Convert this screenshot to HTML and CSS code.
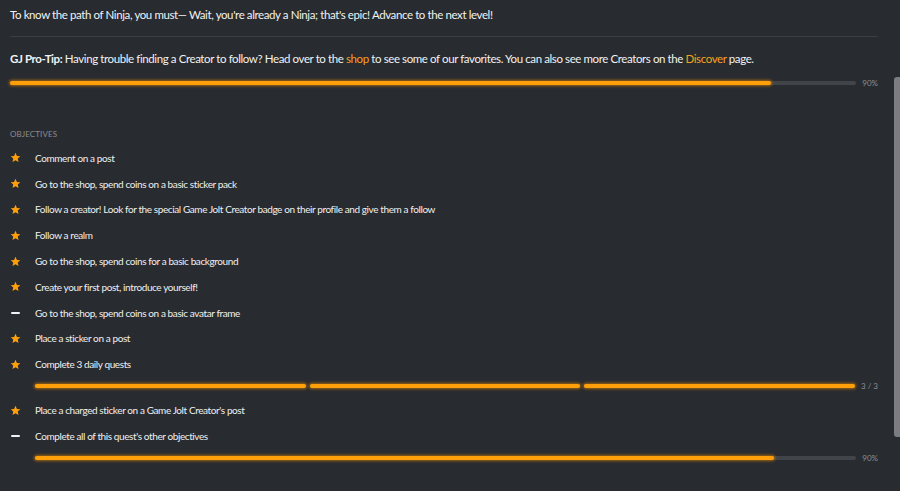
FILE: index.html
```html
<!DOCTYPE html>
<html>
<head>
<meta charset="utf-8">
<link rel="stylesheet" href="styles.css">
</head>
<body>
<div class="page">
  <p class="intro">To know the path of Ninja, you must— Wait, you're already a Ninja; that's epic! Advance to the next level!</p>
  <hr class="divider">
  <p class="tip"><b>GJ Pro-Tip:</b> Having trouble finding a Creator to follow? Head over to the <a class="link">shop</a> to see some of our favorites. You can also see more Creators on the <a class="link">Discover</a> page.</p>
  <div class="progress top">
    <div class="track"><div class="fill" style="width:90%"></div></div>
    <span class="plabel">90%</span>
  </div>

  <div class="heading">OBJECTIVES</div>
  <ul class="objectives">
    <li class="obj"><span class="icon"><svg viewBox="0 0 24 24" class="star"><path d="M12 1.8l3.1 6.9 7.4.7-5.6 5 1.7 7.3L12 17.9l-6.6 3.8 1.7-7.3-5.6-5 7.4-.7z"/></svg></span>Comment on a post</li>
    <li class="obj"><span class="icon"><svg viewBox="0 0 24 24" class="star"><path d="M12 1.8l3.1 6.9 7.4.7-5.6 5 1.7 7.3L12 17.9l-6.6 3.8 1.7-7.3-5.6-5 7.4-.7z"/></svg></span>Go to the shop, spend coins on a basic sticker pack</li>
    <li class="obj"><span class="icon"><svg viewBox="0 0 24 24" class="star"><path d="M12 1.8l3.1 6.9 7.4.7-5.6 5 1.7 7.3L12 17.9l-6.6 3.8 1.7-7.3-5.6-5 7.4-.7z"/></svg></span>Follow a creator! Look for the special Game Jolt Creator badge on their profile and give them a follow</li>
    <li class="obj"><span class="icon"><svg viewBox="0 0 24 24" class="star"><path d="M12 1.8l3.1 6.9 7.4.7-5.6 5 1.7 7.3L12 17.9l-6.6 3.8 1.7-7.3-5.6-5 7.4-.7z"/></svg></span>Follow a realm</li>
    <li class="obj"><span class="icon"><svg viewBox="0 0 24 24" class="star"><path d="M12 1.8l3.1 6.9 7.4.7-5.6 5 1.7 7.3L12 17.9l-6.6 3.8 1.7-7.3-5.6-5 7.4-.7z"/></svg></span>Go to the shop, spend coins for a basic background</li>
    <li class="obj"><span class="icon"><svg viewBox="0 0 24 24" class="star"><path d="M12 1.8l3.1 6.9 7.4.7-5.6 5 1.7 7.3L12 17.9l-6.6 3.8 1.7-7.3-5.6-5 7.4-.7z"/></svg></span>Create your first post, introduce yourself!</li>
    <li class="obj"><span class="icon"><span class="dash"></span></span>Go to the shop, spend coins on a basic avatar frame</li>
    <li class="obj"><span class="icon"><svg viewBox="0 0 24 24" class="star"><path d="M12 1.8l3.1 6.9 7.4.7-5.6 5 1.7 7.3L12 17.9l-6.6 3.8 1.7-7.3-5.6-5 7.4-.7z"/></svg></span>Place a sticker on a post</li>
    <li class="obj"><span class="icon"><svg viewBox="0 0 24 24" class="star"><path d="M12 1.8l3.1 6.9 7.4.7-5.6 5 1.7 7.3L12 17.9l-6.6 3.8 1.7-7.3-5.6-5 7.4-.7z"/></svg></span>Complete 3 daily quests</li>
    <li class="progress sub">
      <div class="segments">
        <div class="seg"><div class="fill full"></div></div>
        <div class="seg"><div class="fill full"></div></div>
        <div class="seg"><div class="fill full"></div></div>
      </div>
      <span class="plabel">3 / 3</span>
    </li>
    <li class="obj"><span class="icon"><svg viewBox="0 0 24 24" class="star"><path d="M12 1.8l3.1 6.9 7.4.7-5.6 5 1.7 7.3L12 17.9l-6.6 3.8 1.7-7.3-5.6-5 7.4-.7z"/></svg></span>Place a charged sticker on a Game Jolt Creator's post</li>
    <li class="obj"><span class="icon"><span class="dash"></span></span>Complete all of this quest's other objectives</li>
    <li class="progress sub">
      <div class="track"><div class="fill" style="width:90%"></div></div>
      <span class="plabel">90%</span>
    </li>
  </ul>
</div>
<div class="scroll-thumb"></div>
</body>
</html>
```

FILE: styles.css
```css
html, body {
  margin: 0;
  padding: 0;
  background: #282b2f;
  height: 100%;
  overflow: hidden;
}
body {
  font-family: Lato, "Open Sans", sans-serif;
  color: #f2f2f2;
  position: relative;
}
.page {
  padding: 7px 22px 0 10px;
}
.intro {
  margin: 0;
  font-size: 11.5px;
  letter-spacing: -0.4px;
  line-height: 16px;
}
.divider {
  border: 0;
  height: 1px;
  background: #3b3e42;
  margin: 13px 0 13px;
}
.tip {
  margin: 0;
  font-size: 11.5px;
  letter-spacing: -0.4px;
  line-height: 17px;
}
.tip b { font-weight: 700; }
.link { color: #f7a11b; }
.progress {
  display: flex;
  align-items: center;
}
.progress.top {
  margin-top: 11px;
}
.track, .seg {
  flex: 1;
  height: 4px;
  background: #414448;
  border-radius: 2px;
  position: relative;
}
.fill {
  height: 100%;
  background: #ff9f0a;
  border-radius: 2px;
  box-shadow: 0 0 3px 1px rgba(255, 150, 0, 0.55);
}
.fill.full { width: 100%; }
.plabel {
  min-width: 16px;
  margin-left: 6px;
  font-size: 8px;
  color: #8d9095;
  text-align: right;
  white-space: nowrap;
}
.heading {
  margin-top: 41px;
  font-size: 8px;
  color: #8a8d92;
  letter-spacing: 0.1px;
}
.objectives {
  list-style: none;
  margin: 6px 0 0;
  padding: 0;
}
.obj {
  display: flex;
  align-items: center;
  height: 25.8px;
  font-size: 10px;
  letter-spacing: -0.4px;
  color: #f0f0f0;
}
.icon {
  width: 25px;
  display: flex;
  align-items: center;
}
.star {
  width: 11px;
  height: 11px;
  fill: #ff9f0a;
}
.dash {
  display: block;
  width: 9px;
  height: 2px;
  margin-left: 1px;
  background: #f2f2f2;
  border-radius: 1px;
}
.progress.sub {
  padding-left: 25px;
  height: 18px;
  margin-bottom: 2px;
}
.segments {
  flex: 1;
  display: flex;
  gap: 4px;
}
.scroll-thumb {
  position: absolute;
  right: 0;
  top: 77px;
  width: 6px;
  height: 360px;
  background: #7b7d80;
  border-radius: 3px 0 0 3px;
}
```
